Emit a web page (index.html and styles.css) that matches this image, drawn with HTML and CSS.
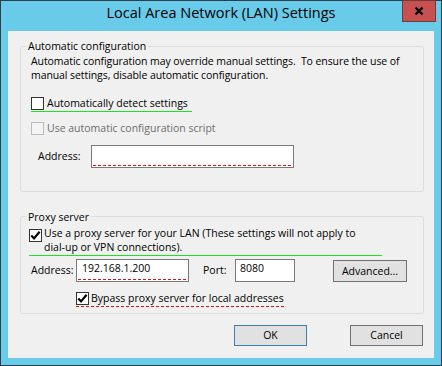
FILE: index.html
```html
<!DOCTYPE html>
<html lang="en">
<head>
<meta charset="utf-8">
<title>Local Area Network (LAN) Settings</title>
<link rel="stylesheet" href="styles.css">
</head>
<body>
<div class="window">
  <div class="titlebar">
    <div class="title-spacer"></div>
    <div class="title">Local Area Network (LAN) Settings</div>
    <div class="close" aria-label="Close">
      <svg width="32" height="20" viewBox="0 0 32 20"><path d="M12.5 6.5 L19.5 13.5 M19.5 6.5 L12.5 13.5" stroke="#000" stroke-width="2.4" fill="none"/></svg>
    </div>
  </div>
  <div class="client">
    <fieldset class="group group-auto">
      <legend>Automatic configuration</legend>
      <div class="note">
        <span class="line">Automatic configuration may override manual settings.&nbsp; To ensure the use of</span>
        <span class="line">manual settings, disable automatic configuration.</span>
      </div>
      <div class="check check-detect"><span class="box"></span><span class="check-label">Automatically detect settings</span></div>
      <div class="check check-script is-disabled"><span class="box"></span><span class="check-label">Use automatic configuration script</span></div>
      <div class="field-row auto-row">
        <span class="field-label auto-label">Address:</span>
        <div class="edit spell auto-edit"></div>
      </div>
    </fieldset>
    <fieldset class="group group-proxy">
      <legend>Proxy server</legend>
      <div class="check check-proxy">
        <span class="box"><svg width="11" height="11" viewBox="0 0 11 11"><path d="M1.3 5.6 L4 8.4 L9.6 1.8" stroke="#000" stroke-width="2.2" fill="none"/></svg></span>
        <span class="check-label">
          <span class="line">Use a proxy server for your LAN (These settings will not apply to</span>
          <span class="line">dial-up or VPN connections).</span>
        </span>
      </div>
      <div class="field-row proxy-row">
        <span class="field-label proxy-label">Address:</span>
        <div class="edit spell addr-edit">192.168.1.200</div>
        <span class="field-label port-label">Port:</span>
        <div class="edit port-edit">8080</div>
        <div class="btn adv-btn">Advanced...</div>
      </div>
      <div class="check check-bypass">
        <span class="box"><svg width="11" height="11" viewBox="0 0 11 11"><path d="M1.3 5.6 L4 8.4 L9.6 1.8" stroke="#000" stroke-width="2.2" fill="none"/></svg></span>
        <span class="check-label">Bypass proxy server for local addresses</span>
      </div>
    </fieldset>
    <div class="actions">
      <div class="btn btn-default">OK</div>
      <div class="btn">Cancel</div>
    </div>
  </div>
</div>
</body>
</html>
```
FILE: styles.css
```css
* { box-sizing: border-box; }
html, body { margin: 0; padding: 0; }
body {
  font-family: "Open Sans", "Noto Sans", sans-serif;
  font-size: 10.5px;
  line-height: 12px;
  color: #000;
  background: #fff;
}
.window {
  width: 442px;
  height: 366px;
  border: 1px solid #2f3d48;
  background: #69cbea;
  display: flex;
  flex-direction: column;
}
.titlebar {
  flex: none;
  height: 30px;
  display: grid;
  grid-template-columns: 1fr auto 1fr;
  align-items: start;
}
.title {
  font-size: 14.5px;
  line-height: 20px;
  padding-top: 2px;
  white-space: nowrap;
  color: #000;
}
.close {
  justify-self: end;
  margin: -1px 5px 0 0;
  width: 34px;
  height: 22px;
  background: #c75050;
  border: 1px solid #6e3a3a;
  display: flex;
}
.client {
  flex: none;
  margin: 0 7px;
  height: 327px;
  background: #f0f0f0;
  padding: 0 10px 0 12px;
  display: flex;
  flex-direction: column;
}
.group {
  margin: 0;
  padding: 0;
  border: 1px solid #dcdcdc;
  border-radius: 3px;
  min-width: 0;
}
.group legend {
  margin-left: 5px;
  padding: 0 2px;
  line-height: 12px;
}
.group-auto { margin-top: 9px; padding-bottom: 23px; }
.group-proxy { margin-top: 19px; padding-bottom: 6px; }
.note {
  margin: 2px 0 0 10px;
  white-space: nowrap;
  letter-spacing: -0.08px;
}
.line {
  display: block;
  line-height: 14.4px;
  white-space: nowrap;
}
.check {
  display: flex;
  align-items: flex-start;
  width: fit-content;
  white-space: nowrap;
}
.box {
  flex: none;
  width: 13px;
  height: 13px;
  border: 1px solid #333;
  background: #fff;
  display: flex;
}
.check-detect {
  margin: 14px 0 0 10px;
  gap: 3px;
  padding: 0 4px 1px 0;
  border-bottom: 1px solid #1ee21e;
}
.check-script {
  margin: 10px 0 0 10px;
  gap: 3px;
}
.is-disabled { color: #6d6d6d; }
.is-disabled .box { border-color: #bcbcbc; background: #f4f4f4; }
.field-row {
  display: flex;
  align-items: center;
  height: 23px;
}
.auto-row { margin-top: 10px; }
.auto-label { margin-left: 17px; width: 53px; }
.edit {
  height: 23px;
  border: 1px solid #7a7a7a;
  background-color: #fff;
  padding: 2px 0 0 5px;
  white-space: nowrap;
}
.spell {
  background-image: repeating-linear-gradient(90deg, #e01010 0 3px, transparent 3px 5px);
  background-size: calc(100% - 2px) 1px;
  background-position: left 1px bottom 1px;
  background-repeat: no-repeat;
}
.auto-edit { width: 203px; }
.check-proxy {
  margin: 3px 0 0 8px;
  width: 353px;
  gap: 2px;
  border-bottom: 1px solid #1ee21e;
}
.check-proxy .box { margin-top: 3px; }
.proxy-row { margin-top: 3px; }
.proxy-label { margin-left: 10px; width: 45px; }
.addr-edit { width: 113px; }
.port-label { margin-left: 14px; width: 32px; }
.port-edit { width: 60px; padding-left: 4px; }
.btn {
  background: #e1e1e1;
  border: 1px solid #707070;
  display: flex;
  align-items: center;
  justify-content: center;
  width: 73px;
  height: 21px;
  white-space: nowrap;
}
.adv-btn {
  margin-left: 38px;
  width: 74px;
  height: 22px;
  align-self: flex-end;
}
.check-bypass {
  margin: 10px 0 0 55px;
  gap: 2px;
  padding-bottom: 2px;
  background-image: repeating-linear-gradient(90deg, #e01010 0 3px, transparent 3px 5px);
  background-size: 100% 1px;
  background-position: left bottom;
  background-repeat: no-repeat;
}
.actions {
  margin: 11px 1px 0 0;
  display: flex;
  justify-content: flex-end;
  gap: 43px;
}
.btn-default { border-color: #3c7fb1; }
```
